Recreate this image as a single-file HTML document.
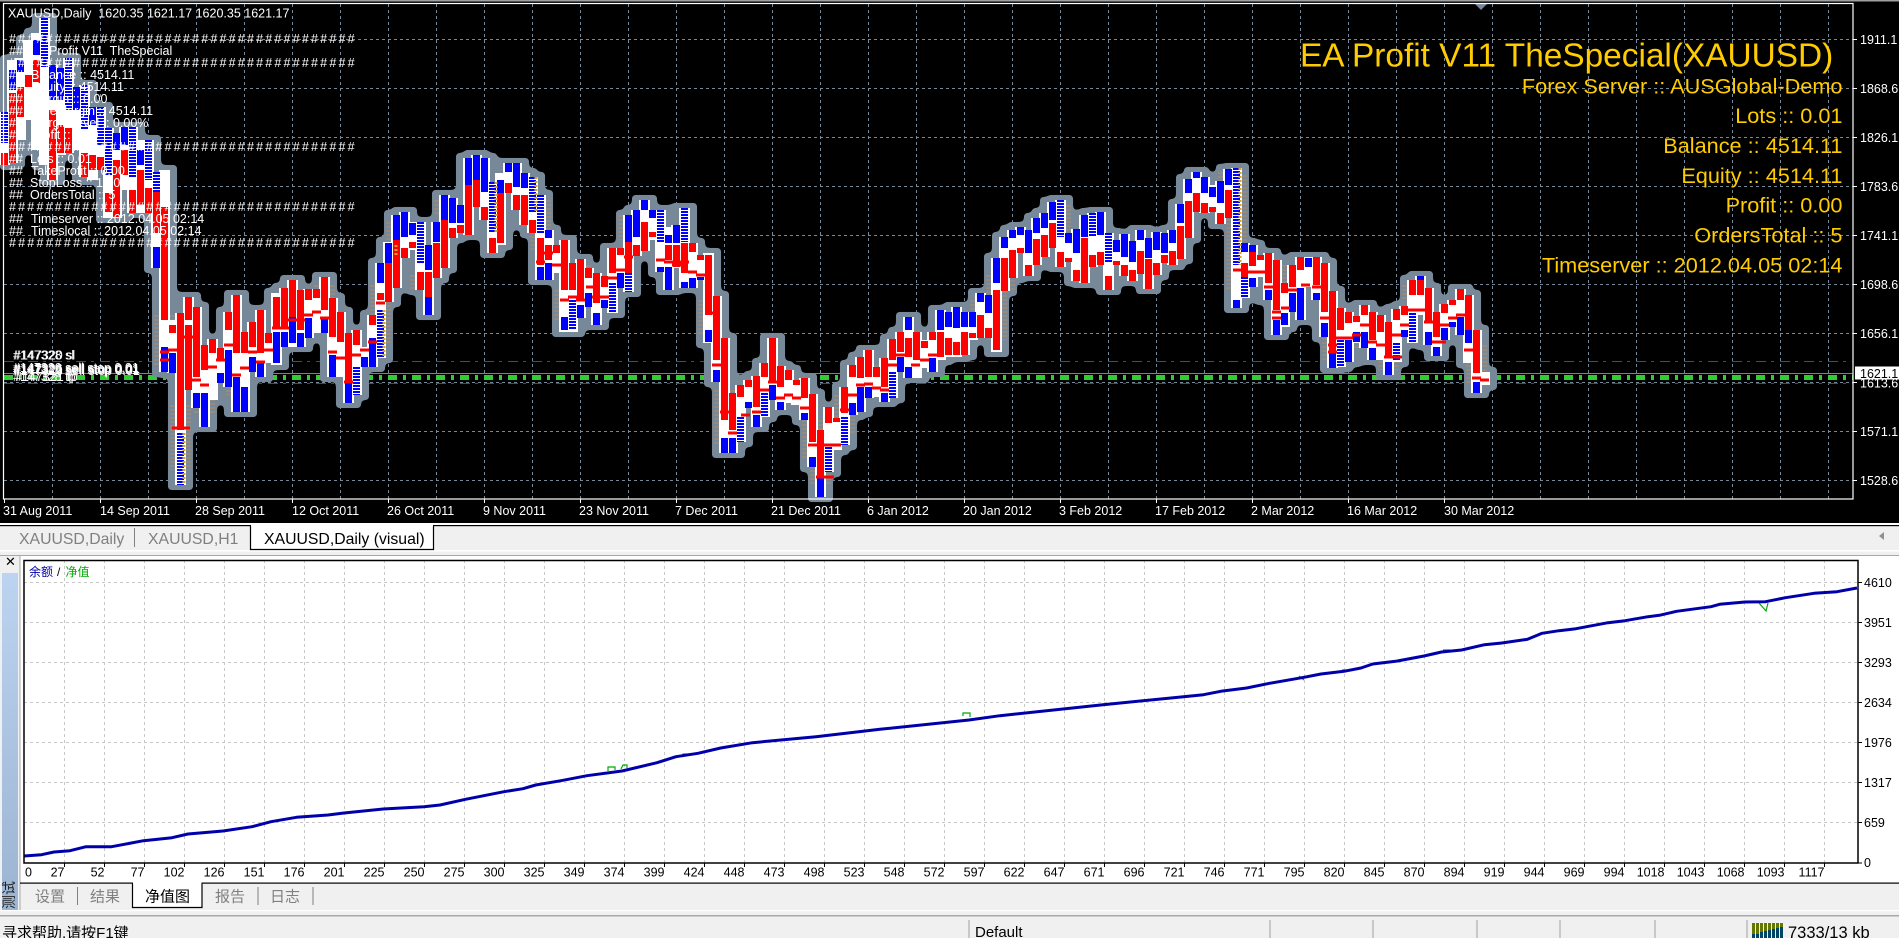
<!DOCTYPE html>
<html><head><meta charset="utf-8"><title>XAUUSD</title>
<style>html,body{margin:0;padding:0;background:#f0f0f0;overflow:hidden}svg{display:block}text{font-family:"Liberation Sans","Noto Sans CJK SC",sans-serif;white-space:pre}</style>
</head><body>
<svg xmlns="http://www.w3.org/2000/svg" width="1899" height="938" viewBox="0 0 1899 938">
<defs>
<filter id="h" filterUnits="userSpaceOnUse" x="0" y="0" width="1899" height="938" color-interpolation-filters="sRGB">
<feMorphology in="SourceAlpha" operator="dilate" radius="7 5"/>
<feGaussianBlur stdDeviation="2"/>
<feComponentTransfer result="a"><feFuncA type="linear" slope="20" intercept="-9"/></feComponentTransfer>
<feFlood flood-color="#778899"/><feComposite in2="a" operator="in"/>
</filter>
<path id="W" d="M4.5 112V165M12.5 60V163M20.5 58V140M28.5 40V120M36.5 33V150M44.5 18V165M52.5 65V180M60.5 68V155M68.5 58V153M76.5 87V150M84.5 85V177M92.5 107V180M100.5 107V170M108.5 128V218M116.5 133V218M124.5 127V190M132.5 127V213M140.5 140V213M148.5 140V213M156.5 172V268M164.5 170V372M172.5 320V373M180.5 313V485M188.5 297V390M196.5 307V408M204.5 345V427M212.5 339V400M220.5 348V383M228.5 312V387M236.5 295V412M244.5 332V412M252.5 322V372M260.5 310V377M268.5 333V363M276.5 293V365M284.5 288V347M292.5 280V347M300.5 290V347M308.5 289V338M316.5 289V333M324.5 277V333M332.5 298V377M340.5 312V377M348.5 333V403M356.5 330V395M364.5 347V367M372.5 315V367M380.5 263V358M388.5 242V302M396.5 215V288M404.5 212V258M412.5 222V250M420.5 222V290M428.5 245V315M436.5 222V278M444.5 195V268M452.5 198V238M460.5 205V233M468.5 158V235M476.5 155V207M484.5 158V220M492.5 182V253M500.5 173V245M508.5 163V193M516.5 163V210M524.5 173V225M532.5 177V233M540.5 195V280M548.5 230V280M556.5 245V273M564.5 240V332M572.5 263V332M580.5 259V318M588.5 268V307M596.5 273V325M604.5 276V308M612.5 248V313M620.5 248V288M628.5 215V292M636.5 210V256M644.5 200V251M652.5 210V240M660.5 210V272M668.5 227V290M676.5 225V268M684.5 208V288M692.5 243V288M700.5 255V280M708.5 253V343M716.5 296V382M724.5 338V453M732.5 393V453M740.5 385V442M748.5 380V408M756.5 376V427M764.5 363V417M772.5 338V400M780.5 366V410M788.5 370V403M796.5 380V405M804.5 378V420M812.5 394V467M820.5 430V497M828.5 407V472M836.5 418V450M844.5 387V445M852.5 365V415M860.5 357V412M868.5 350V398M876.5 367V397M884.5 358V402M892.5 339V398M900.5 332V372M908.5 317V378M916.5 332V378M924.5 340V368M932.5 332V372M940.5 310V360M948.5 312V357M956.5 307V357M964.5 312V355M972.5 312V340M980.5 293V338M988.5 295V338M996.5 258V352M1004.5 237V291M1012.5 230V278M1020.5 227V253M1028.5 230V276M1036.5 218V265M1044.5 213V257M1052.5 202V248M1060.5 200V267M1068.5 233V262M1076.5 229V281M1084.5 215V283M1092.5 213V267M1100.5 212V265M1108.5 233V290M1116.5 240V265M1124.5 234V276M1132.5 241V281M1140.5 230V274M1148.5 238V289M1156.5 232V275M1164.5 233V263M1172.5 230V265M1180.5 204V259M1188.5 179V238M1196.5 172V212M1204.5 177V213M1212.5 185V212M1220.5 181V224M1228.5 169V218M1236.5 168V308M1244.5 243V298M1252.5 245V287M1260.5 255V277M1268.5 253V300M1276.5 260V335M1284.5 283V327M1292.5 265V312M1300.5 257V320M1308.5 257V287M1316.5 257V300M1324.5 263V337M1332.5 291V368M1340.5 308V367M1348.5 312V362M1356.5 316V343M1364.5 305V348M1372.5 312V360M1380.5 315V360M1388.5 322V375M1396.5 309V362M1404.5 306V337M1412.5 280V343M1420.5 276V315M1428.5 288V345M1436.5 312V356M1444.5 304V340M1452.5 300V327M1460.5 289V335M1468.5 295V363M1476.5 330V393M1484.5 372V385"/>
</defs>
<!-- main chart -->
<rect x="0" y="0" width="1899" height="523" fill="#000"/>
<rect x="0" y="0" width="1899" height="1.5" fill="#a0a0a0"/>
<g fill="none" stroke="#778899" stroke-width="1" stroke-dasharray="3 3">
<path d="M4 39.5H1853M4 88.5H1853M4 137.5H1853M4 186.5H1853M4 235.5H1853M4 284.5H1853M4 333.5H1853M4 382.5H1853M4 431.5H1853M4 480.5H1853"/>
<path d="M52.5 4V499M100.5 4V499M148.5 4V499M196.5 4V499M244.5 4V499M292.5 4V499M340.5 4V499M388.5 4V499M436.5 4V499M484.5 4V499M532.5 4V499M580.5 4V499M628.5 4V499M676.5 4V499M724.5 4V499M772.5 4V499M820.5 4V499M868.5 4V499M916.5 4V499M964.5 4V499M1012.5 4V499M1060.5 4V499M1108.5 4V499M1156.5 4V499M1204.5 4V499M1252.5 4V499M1300.5 4V499M1348.5 4V499M1396.5 4V499M1444.5 4V499M1492.5 4V499M1540.5 4V499M1588.5 4V499M1636.5 4V499M1684.5 4V499M1732.5 4V499M1780.5 4V499M1828.5 4V499"/>
</g>
<path d="M4 361.5H1853M4 383.5H1853" fill="none" stroke="#f00" stroke-dasharray="10 5 3 6"/>
<path d="M4 373.5H1853" fill="none" stroke="#808080"/>
<path d="M4 377.5H1853" fill="none" stroke="#32cd32" stroke-width="5" stroke-dasharray="9 6 3 6"/>
<path d="M1475 4H1487L1481 10Z" fill="#778899"/>
<!-- candles -->
<use href="#W" fill="none" stroke="#fff" stroke-width="11" filter="url(#h)"/>
<path fill="none" stroke="#a08c78" stroke-width="21" stroke-dasharray="2 2" opacity=".75" d="M180.5 405V470M164.5 315V365M172.5 325V345M204.5 375V415M236.5 370V395M324.5 285V315M340.5 350V375M380.5 285V345M396.5 222V250M420.5 275V290M444.5 200V215M452.5 205V225M540.5 200V250M556.5 250V270M564.5 290V320M580.5 265V310M628.5 215V240M708.5 300V335M724.5 390V445M812.5 420V460M820.5 450V485M844.5 395V435M884.5 365V385M956.5 330V350M980.5 300V330M996.5 275V340M1004.5 280V290M1060.5 205V235M1228.5 172V205M1236.5 175V290M1276.5 265V300M1332.5 310V360M1348.5 330V350M1388.5 345V370M1476.5 345V385M1412.5 285V300"/>
<use href="#W" fill="none" stroke="#fff" stroke-width="11" shape-rendering="crispEdges"/>
<g fill="none" stroke-width="7" shape-rendering="crispEdges">
<path stroke="#00f" d="M12.5 70V90M20.5 60V72M36.5 40V55M52.5 65V100M60.5 68V100M76.5 87V110M92.5 107V125M116.5 133V150M124.5 127V145M140.5 150V165M156.5 247V268M164.5 347V372M172.5 353V373M196.5 393V408M204.5 393V427M220.5 373V383M228.5 350V387M236.5 377V412M244.5 387V412M252.5 357V372M260.5 363V377M276.5 332V363M284.5 332V347M292.5 317V343M300.5 333V347M308.5 318V338M324.5 317V333M332.5 355V377M348.5 383V403M364.5 357V367M372.5 338V367M380.5 263V283M388.5 243V263M396.5 215V240M404.5 212V237M412.5 223V235M428.5 245V270M428.5 297V315M436.5 222V242M444.5 195V220M452.5 198V223M460.5 205V223M468.5 158V185M476.5 155V180M484.5 158V192M500.5 180V193M508.5 163V172M516.5 163V187M524.5 173V188M540.5 267V280M548.5 230V238M548.5 263V280M564.5 317V330M580.5 305V318M588.5 293V307M596.5 313V325M604.5 300V308M620.5 273V288M628.5 215V242M636.5 210V237M644.5 200V210M652.5 210V218M660.5 267V272M668.5 235V243M668.5 267V290M676.5 225V243M684.5 282V288M692.5 278V288M700.5 277V280M708.5 330V342M716.5 370V382M724.5 438V453M732.5 438V453M748.5 402V408M756.5 415V427M772.5 385V400M780.5 402V410M804.5 413V420M812.5 457V467M820.5 478V497M852.5 403V415M860.5 387V412M868.5 387V398M884.5 393V402M900.5 357V372M908.5 317V330M908.5 367V378M932.5 358V372M940.5 310V330M948.5 312V327M956.5 307V328M964.5 312V327M972.5 312V327M980.5 293V302M988.5 295V313M996.5 258V283M1004.5 237V248M1012.5 230V238M1020.5 227V235M1028.5 230V253M1036.5 218V233M1044.5 213V228M1052.5 202V220M1068.5 233V243M1076.5 229V253M1084.5 215V237M1100.5 212V235M1116.5 240V252M1124.5 234V257M1132.5 241V262M1140.5 230V240M1148.5 238V258M1156.5 232V250M1164.5 233V253M1172.5 230V243M1180.5 204V223M1188.5 179V193M1196.5 172V178M1204.5 177V193M1212.5 187V197M1220.5 181V203M1228.5 169V185M1236.5 300V308M1244.5 243V252M1252.5 245V252M1252.5 278V287M1268.5 290V300M1276.5 320V335M1284.5 313V325M1292.5 293V312M1300.5 288V320M1308.5 258V267M1316.5 293V300M1324.5 323V337M1332.5 353V368M1348.5 340V362M1356.5 332V342M1364.5 332V348M1372.5 348V360M1388.5 362V375M1404.5 330V337M1420.5 276V280M1428.5 332V345M1436.5 347V356M1444.5 328V340M1452.5 322V327M1460.5 317V335M1468.5 330V343M1476.5 382V393"/>
<path stroke="#00f" stroke-dasharray="2 1" d="M4.5 112V143M44.5 18V67M68.5 58V110M84.5 85V130M100.5 107V145M108.5 128V175M132.5 127V177M148.5 140V180M156.5 172V200M180.5 433V485M356.5 367V395M380.5 310V358M420.5 222V263M492.5 182V233M532.5 177V213M540.5 195V233M572.5 300V330M612.5 283V313M628.5 273V292M660.5 210V243M684.5 208V242M740.5 417V442M764.5 393V417M828.5 447V472M844.5 417V445M892.5 372V398M1060.5 200V237M1092.5 213V237M1108.5 233V263M1236.5 168V265M1244.5 277V298M1340.5 340V367M1396.5 343V360M1412.5 313V343"/>
<path stroke="#f00" d="M4.5 153V165M12.5 93V163M20.5 87V117M28.5 75V87M36.5 60V83M52.5 110V180M60.5 125V153M68.5 128V153M84.5 153V177M92.5 155V170M100.5 157V170M108.5 193V212M116.5 160V217M124.5 150V175M132.5 190V213M140.5 170V205M148.5 188V213M156.5 192V233M164.5 207V320M172.5 325V333M180.5 313V430M188.5 297V320M188.5 325V390M196.5 307V377M204.5 345V370M212.5 339V353M220.5 348V360M228.5 312V330M236.5 295V353M244.5 332V353M252.5 322V347M260.5 310V353M268.5 333V343M276.5 297V327M284.5 288V327M292.5 280V317M300.5 290V330M308.5 289V300M316.5 289V298M324.5 277V310M332.5 298V337M340.5 312V342M348.5 333V383M356.5 330V345M372.5 315V325M380.5 293V300M388.5 263V302M396.5 240V288M404.5 248V258M412.5 242V248M420.5 272V290M428.5 272V297M436.5 243V278M444.5 220V268M452.5 228V238M460.5 225V233M468.5 185V235M476.5 180V207M484.5 207V220M492.5 238V253M500.5 193V243M508.5 183V193M516.5 195V210M524.5 195V225M532.5 220V233M540.5 238V265M548.5 245V260M556.5 245V253M564.5 240V290M572.5 263V290M580.5 259V300M588.5 268V278M596.5 273V303M604.5 276V287M612.5 248V273M620.5 248V255M628.5 242V273M636.5 245V256M644.5 222V251M652.5 232V237M668.5 245V260M676.5 245V267M684.5 243V273M692.5 243V252M700.5 255V260M708.5 255V315M716.5 296V360M724.5 338V420M732.5 393V430M740.5 385V397M748.5 380V387M756.5 376V407M764.5 363V377M772.5 338V383M780.5 366V387M788.5 370V380M796.5 380V385M804.5 378V398M812.5 394V442M820.5 430V477M828.5 407V423M836.5 418V422M844.5 387V413M852.5 365V377M860.5 357V378M868.5 350V377M876.5 367V377M884.5 358V387M892.5 339V360M900.5 332V352M908.5 338V357M916.5 332V360M924.5 341V348M932.5 332V340M940.5 332V357M948.5 338V355M956.5 342V355M964.5 332V355M972.5 333V338M980.5 315V338M988.5 328V338M996.5 290V350M1004.5 258V291M1012.5 250V278M1020.5 248V253M1028.5 265V276M1036.5 239V265M1044.5 235V257M1052.5 223V248M1060.5 252V267M1068.5 258V262M1076.5 270V281M1084.5 238V283M1092.5 255V267M1100.5 252V265M1108.5 276V290M1116.5 261V265M1124.5 265V276M1132.5 270V281M1140.5 251V274M1148.5 259V289M1156.5 263V275M1164.5 255V263M1172.5 251V265M1180.5 226V259M1188.5 201V238M1196.5 193V212M1204.5 203V213M1212.5 207V212M1220.5 213V224M1228.5 190V218M1244.5 263V277M1252.5 252V266M1260.5 255V260M1268.5 253V283M1276.5 260V310M1284.5 283V293M1292.5 265V287M1300.5 257V270M1316.5 257V285M1324.5 263V312M1332.5 291V353M1340.5 308V330M1348.5 312V323M1356.5 316V322M1364.5 305V315M1372.5 312V340M1380.5 315V332M1388.5 322V357M1396.5 309V320M1404.5 306V315M1412.5 280V295M1420.5 280V295M1428.5 288V322M1436.5 312V337M1444.5 304V313M1452.5 300V305M1460.5 289V300M1468.5 295V330M1476.5 330V373"/>
</g>
<path fill="none" stroke="#daa520" stroke-width="3" stroke-dasharray="2 2" d="M184 433V485M384 310V358M496 182V233M1240 168V265M536 177V213M396 245V255"/>
<!-- red arrows -->
<path fill="none" stroke="#f00" stroke-width="3" shape-rendering="crispEdges" d="M160 352h9M168 350h9M160 360h9M172 428h18M184 337h9M192 380h9M200 385h9M208 367h9M216 360h9M224 345h9M232 375h9M240 368h9M248 352h9M256 362h9M264 350h9M272 328h9M280 328h9M288 320h9M296 320h9M304 315h9M312 312h9M320 318h9M328 352h9M336 358h9M344 382h9M352 355h9M360 350h9M368 342h9M376 303h9M536 262h9M544 253h9M552 265h9M560 300h9M568 297h9M576 300h9M586 287h9M592 297h9M600 297h9M608 278h9M616 270h9M624 257h9M656 260h9M664 262h9M672 265h9M680 262h9M688 272h9M696 275h9M712 365h9M708 313h9M720 412h9M728 433h9M741 415h9M752 412h9M760 390h9M768 382h9M776 398h9M784 395h9M792 398h9M800 408h9M808 445h9M816 477h18M824 445h9M832 445h9M840 410h9M848 395h9M856 385h9M864 384h9M872 388h9M880 390h9M888 365h9M896 355h9M911 365h9M920 360h9M928 355h9M1233 270h9M1241 272h9M1248 272h9M1256 272h9M1264 287h9M1272 312h9M1281 308h9M1272 318h9M1288 290h9M1301 285h9M1312 287h9M1320 318h9M1328 345h9M1328 352h9M1336 338h9M1344 338h9M1352 335h9M1360 325h9M1368 342h9M1376 345h9M1384 357h18M1392 335h9M1400 325h9M1408 310h9M1416 310h9M1424 322h9M1432 342h14M1440 325h9M1448 318h9M1456 315h9M1464 350h9M1472 378h9M1480 380h9"/>
<!-- comment block, drawn over the candles -->
<g fill="#fff" font-size="12.5">
<text x="9" y="55">##</text><text x="49" y="55">Profit V11  TheSpecial</text>
<text x="9" y="79">## </text><text x="31" y="79">Balance :: 4514.11</text>
<text x="9" y="91">## </text><text x="31" y="91">Equity :: 4514.11</text>
<text x="9" y="103">## </text><text x="31" y="103">Margin :: 0.00</text>
<text x="9" y="115">## </text><text x="31" y="115">FreeMargin :: 4514.11</text>
<text x="9" y="127">## </text><text x="31" y="127">MarginLevel :: 0.00%</text>
<text x="9" y="139">## </text><text x="31" y="139">Profit :: 0.00</text>
<text x="9" y="163">## </text><text x="30" y="163">Lots :: 0.01</text>
<text x="9" y="175">## </text><text x="31" y="175">TakeProfit :: 0.00</text>
<text x="9" y="187">## </text><text x="30" y="187">StopLoss :: 1.00</text>
<text x="9" y="199">## </text><text x="30" y="199">OrdersTotal :: 5</text>
<text x="9" y="223">## </text><text x="31" y="223">Timeserver :: 2012.04.05 02:14</text>
<text x="9" y="235">## </text><text x="31" y="235">Timeslocal :: 2012.04.05 02:14</text>
</g>
<g fill="#fff" font-size="12.5" letter-spacing="2.2">
<text x="9" y="43">######################################</text>
<text x="9" y="67">######################################</text>
<text x="9" y="151">######################################</text>
<text x="9" y="211">######################################</text>
<text x="9" y="247">######################################</text>
</g>
<text x="8" y="17.5" fill="#fff" font-size="12.5">XAUUSD,Daily  1620.35 1621.17 1620.35 1621.17</text>
<!-- order labels -->
<g fill="#fff" font-size="12.5">
<text x="13" y="359.5">#147328 sl</text><text x="14" y="359.5">#147320 sl</text>
<text x="13" y="374">#147328 sell stop 0.01</text><text x="14" y="375">#147323 sell stop 0.01</text><text x="13" y="372">#147320 sell stop 0.01</text><text x="14" y="373">#147326 sell stop 0.01</text>
<text x="13" y="381">#147328 tp</text><text x="15" y="381">#147321 tp</text>
</g>
<!-- yellow panel -->
<g fill="#ffcc00">
<text x="1300" y="66.5" font-size="33.4">EA Profit V11 TheSpecial(XAUUSD)</text>
<g font-size="21.7" text-anchor="end">
<text x="1842.5" y="93.5">Forex Server :: AUSGlobal-Demo</text>
<text x="1842.5" y="123">Lots :: 0.01</text>
<text x="1842.5" y="153">Balance :: 4514.11</text>
<text x="1842.5" y="183">Equity :: 4514.11</text>
<text x="1842.5" y="212.7">Profit :: 0.00</text>
<text x="1842.5" y="242.7">OrdersTotal :: 5</text>
<text x="1842.5" y="272.7">Timeserver :: 2012.04.05 02:14</text>
</g></g>
<!-- frame -->
<rect x="3.5" y="3.5" width="1849.5" height="495.5" fill="none" stroke="#fff" stroke-width="1.2"/>
<path d="M1853 39.5h4M1853 88.5h4M1853 137.5h4M1853 186.5h4M1853 235.5h4M1853 284.5h4M1853 333.5h4M1853 382.5h4M1853 431.5h4M1853 480.5h4M4.5 499v4M100.5 499v4M196.5 499v4M292.5 499v4M388.5 499v4M484.5 499v4M580.5 499v4M676.5 499v4M772.5 499v4M868.5 499v4M964.5 499v4M1060.5 499v4M1156.5 499v4M1252.5 499v4M1348.5 499v4M1444.5 499v4" stroke="#fff" fill="none"/>
<g fill="#fff" font-size="12.5">
<text x="1860" y="44">1911.1</text><text x="1860" y="93">1868.6</text><text x="1860" y="142">1826.1</text><text x="1860" y="191">1783.6</text><text x="1860" y="240">1741.1</text><text x="1860" y="289">1698.6</text><text x="1860" y="338">1656.1</text><text x="1860" y="387.5">1613.6</text><text x="1860" y="436">1571.1</text><text x="1860" y="485">1528.6</text>
<text x="3" y="515">31 Aug 2011</text><text x="100" y="515">14 Sep 2011</text><text x="195" y="515">28 Sep 2011</text><text x="292" y="515">12 Oct 2011</text><text x="387" y="515">26 Oct 2011</text><text x="483" y="515">9 Nov 2011</text><text x="579" y="515">23 Nov 2011</text><text x="675" y="515">7 Dec 2011</text><text x="771" y="515">21 Dec 2011</text><text x="867" y="515">6 Jan 2012</text><text x="963" y="515">20 Jan 2012</text><text x="1059" y="515">3 Feb 2012</text><text x="1155" y="515">17 Feb 2012</text><text x="1251" y="515">2 Mar 2012</text><text x="1347" y="515">16 Mar 2012</text><text x="1444" y="515">30 Mar 2012</text>
</g>
<rect x="1855" y="366.5" width="44" height="13" fill="#fff"/>
<text x="1860" y="378" fill="#000" font-size="12.5">1621.1</text>
<!-- tab bar -->
<rect x="0" y="523" width="1899" height="33" fill="#f0f0f0"/>
<rect x="0" y="523" width="1899" height="2" fill="#fff"/>
<rect x="0" y="525" width="1899" height="1.2" fill="#000"/>
<rect x="0" y="550" width="1899" height="1.5" fill="#fff"/>
<rect x="0" y="555" width="1899" height="1.2" fill="#a8a8a8"/>
<path d="M250.5 525V549.5H433.5V525" fill="#fff" stroke="#000" stroke-width="1.2"/>
<rect x="251" y="524" width="182" height="2.5" fill="#fff"/>
<rect x="134" y="528" width="1" height="19" fill="#808080"/>
<g font-size="15.8">
<text x="19" y="544" fill="#808080">XAUUSD,Daily</text>
<text x="148" y="544" fill="#808080">XAUUSD,H1</text>
<text x="264" y="544" fill="#000">XAUUSD,Daily (visual)</text>
</g>
<path d="M1879 536L1884 532V540Z" fill="#909090"/>
<!-- lower panel -->
<rect x="0" y="556" width="1899" height="327" fill="#fff"/>
<rect x="0" y="556" width="20" height="354" fill="#f0f0f0"/>
<defs><linearGradient id="g" x1="0" y1="0" x2="0" y2="1"><stop offset="0" stop-color="#bcd4f0"/><stop offset="1" stop-color="#9bb4d2"/></linearGradient></defs>
<rect x="2" y="573" width="16" height="337" fill="url(#g)"/>
<rect x="19.5" y="556" width="1" height="354" fill="#a8a8a8"/>
<text x="5" y="566" font-size="13" fill="#000">✕</text>
<text transform="translate(14,909) rotate(-90)" font-size="14" fill="#222">测试</text>
<g fill="none" stroke="#c8c8c8" stroke-dasharray="3 3">
<path d="M24 582.5H1858M24 622.5H1858M24 662.5H1858M24 702.5H1858M24 742.5H1858M24 782.5H1858M24 822.5H1858"/>
<path d="M64.5 560V863M104.5 560V863M144.5 560V863M184.5 560V863M224.5 560V863M264.5 560V863M304.5 560V863M344.5 560V863M384.5 560V863M424.5 560V863M464.5 560V863M504.5 560V863M544.5 560V863M584.5 560V863M624.5 560V863M664.5 560V863M704.5 560V863M744.5 560V863M784.5 560V863M824.5 560V863M864.5 560V863M904.5 560V863M944.5 560V863M984.5 560V863M1024.5 560V863M1064.5 560V863M1104.5 560V863M1144.5 560V863M1184.5 560V863M1224.5 560V863M1264.5 560V863M1304.5 560V863M1344.5 560V863M1384.5 560V863M1424.5 560V863M1464.5 560V863M1504.5 560V863M1544.5 560V863M1584.5 560V863M1624.5 560V863M1664.5 560V863M1704.5 560V863M1744.5 560V863M1784.5 560V863M1824.5 560V863"/>
</g>
<path fill="none" stroke="#00aa00" stroke-width="1.2" d="M608 771V767H615V770M621 769L623 765H627V768M682 757L683 754H689M963 716V713H970V717M1759 603L1766 611L1768 603M1299 676L1304 680M1220 691H1226M1443 650H1450M1490 644H1500M1620 621H1626M1342 670H1349"/>
<path fill="none" stroke="#0000aa" stroke-width="3" stroke-linejoin="round" d="M24 856L41.5 854.7L54 852L70 850.7L86 846.7L111.6 846.7L143.5 840.7L172 837.7L188 834L223 831L252 826.7L271 821.7L296.5 817.3L328 815L344 813L383 809L424 806.7L440 805L465.5 799.3L504 791.7L523 788.7L535.7 785L561 780.7L587 775.7L622 771L657 762.7L676 756.7L698 753.3L720.7 748L752.5 742.7L816 736.7L880 729.3L969 720L1000 715.7L1103 704.7L1183.5 696.7L1203.5 694.7L1220.8 691.3L1246.6 688L1269.5 683.3L1304 677.3L1321 674L1344 671.3L1361 668L1372.7 664L1395.6 661.3L1424 656L1441.5 652L1461.6 650L1484.5 644.7L1501.7 643L1527.5 639.3L1542 633.3L1559 630.7L1576 628.7L1608 622.7L1625 620.7L1648 616.7L1659.4 615.3L1676.6 611.3L1711 606.7L1719.6 604.3L1745 602L1765.5 601.7L1785.5 597.7L1814 593.3L1837 591.7L1857 588"/>
<rect x="24" y="560.5" width="1834" height="302.5" fill="none" stroke="#000" stroke-width="1.5"/>
<path d="M1858 582.5h4M1858 622.5h4M1858 662.5h4M1858 702.5h4M1858 742.5h4M1858 782.5h4M1858 822.5h4M1858 863h4M64.5 863v4M104.5 863v4M144.5 863v4M184.5 863v4M224.5 863v4M264.5 863v4M304.5 863v4M344.5 863v4M384.5 863v4M424.5 863v4M464.5 863v4M504.5 863v4M544.5 863v4M584.5 863v4M624.5 863v4M664.5 863v4M704.5 863v4M744.5 863v4M784.5 863v4M824.5 863v4M864.5 863v4M904.5 863v4M944.5 863v4M984.5 863v4M1024.5 863v4M1064.5 863v4M1104.5 863v4M1144.5 863v4M1184.5 863v4M1224.5 863v4M1264.5 863v4M1304.5 863v4M1344.5 863v4M1384.5 863v4M1424.5 863v4M1464.5 863v4M1504.5 863v4M1544.5 863v4M1584.5 863v4M1624.5 863v4M1664.5 863v4M1704.5 863v4M1744.5 863v4M1784.5 863v4M1824.5 863v4" stroke="#000" fill="none"/>
<g font-size="12" font-family="Liberation Sans, Noto Sans CJK SC, sans-serif">
<text x="29" y="576" fill="#0000aa">余额</text><text x="57" y="576" fill="#000">/</text><text x="65.5" y="576" fill="#00aa00">净值</text>
</g>
<g fill="#000" font-size="12.5">
<text x="1864" y="587">4610</text><text x="1864" y="627">3951</text><text x="1864" y="667">3293</text><text x="1864" y="707">2634</text><text x="1864" y="747">1976</text><text x="1864" y="787">1317</text><text x="1864" y="827">659</text><text x="1864" y="867">0</text>
<text x="25" y="876.5">0</text>
<g text-anchor="end">
<text x="64.5" y="876.5">27</text><text x="104.5" y="876.5">52</text><text x="144.5" y="876.5">77</text><text x="184.5" y="876.5">102</text><text x="224.5" y="876.5">126</text><text x="264.5" y="876.5">151</text><text x="304.5" y="876.5">176</text><text x="344.5" y="876.5">201</text><text x="384.5" y="876.5">225</text><text x="424.5" y="876.5">250</text><text x="464.5" y="876.5">275</text><text x="504.5" y="876.5">300</text><text x="544.5" y="876.5">325</text><text x="584.5" y="876.5">349</text><text x="624.5" y="876.5">374</text><text x="664.5" y="876.5">399</text><text x="704.5" y="876.5">424</text><text x="744.5" y="876.5">448</text><text x="784.5" y="876.5">473</text><text x="824.5" y="876.5">498</text><text x="864.5" y="876.5">523</text><text x="904.5" y="876.5">548</text><text x="944.5" y="876.5">572</text><text x="984.5" y="876.5">597</text><text x="1024.5" y="876.5">622</text><text x="1064.5" y="876.5">647</text><text x="1104.5" y="876.5">671</text><text x="1144.5" y="876.5">696</text><text x="1184.5" y="876.5">721</text><text x="1224.5" y="876.5">746</text><text x="1264.5" y="876.5">771</text><text x="1304.5" y="876.5">795</text><text x="1344.5" y="876.5">820</text><text x="1384.5" y="876.5">845</text><text x="1424.5" y="876.5">870</text><text x="1464.5" y="876.5">894</text><text x="1504.5" y="876.5">919</text><text x="1544.5" y="876.5">944</text><text x="1584.5" y="876.5">969</text><text x="1624.5" y="876.5">994</text><text x="1664.5" y="876.5">1018</text><text x="1704.5" y="876.5">1043</text><text x="1744.5" y="876.5">1068</text><text x="1784.5" y="876.5">1093</text><text x="1824.5" y="876.5">1117</text>
</g></g>
<!-- lower tabs -->
<rect x="20.5" y="883" width="1879" height="27" fill="#f0f0f0"/>
<rect x="20" y="882.5" width="1879" height="1.2" fill="#000"/>
<path d="M132.5 883V907.5H202V883" fill="#fff" stroke="#000" stroke-width="1.2"/>
<rect x="133" y="882" width="68.5" height="2" fill="#fff"/>
<path d="M77.5 887V905M258 887V905M313 887V905" stroke="#808080" fill="none"/>
<g font-size="15" font-family="Liberation Sans, Noto Sans CJK SC, sans-serif">
<text x="35" y="901.5" fill="#808080">设置</text><text x="90" y="901.5" fill="#808080">结果</text><text x="145" y="901.5" fill="#000">净值图</text><text x="215" y="901.5" fill="#808080">报告</text><text x="270" y="901.5" fill="#808080">日志</text>
</g>
<!-- status bar -->
<rect x="0" y="910" width="1899" height="28" fill="#f0f0f0"/>
<rect x="0" y="910" width="1899" height="1.2" fill="#fff"/>
<rect x="0" y="915" width="1899" height="1.5" fill="#a8a8a8"/>
<path d="M969 920V938M1270 920V938M1373 920V938M1477 920V938M1560 920V938M1655 920V938M1747 920V938" stroke="#a0a0a0" fill="none"/>
<text x="2" y="938" font-size="15" fill="#000" font-family="Liberation Sans, Noto Sans CJK SC, sans-serif">寻求帮助,请按F1键</text>
<text x="975" y="937" font-size="15" fill="#000">Default</text>
<g shape-rendering="crispEdges">
<path fill="#667700" d="M1752 923h3v15h-3zM1756 923h3v15h-3zM1760 923h3v15h-3zM1764 923h3v15h-3zM1768 923h3v15h-3zM1772 923h3v15h-3zM1776 923h3v15h-3zM1780 923h3v15h-3z"/>
<path fill="#004466" d="M1752 934h3v4h-3zM1756 934h3v4h-3zM1760 932h3v6h-3zM1764 931h3v7h-3zM1768 930h3v8h-3zM1772 929h3v9h-3zM1776 928h3v10h-3zM1780 927h3v11h-3z"/>
</g>
<text x="1788" y="938" font-size="16.5" fill="#000">7333/13 kb</text>
</svg>
</body></html>
